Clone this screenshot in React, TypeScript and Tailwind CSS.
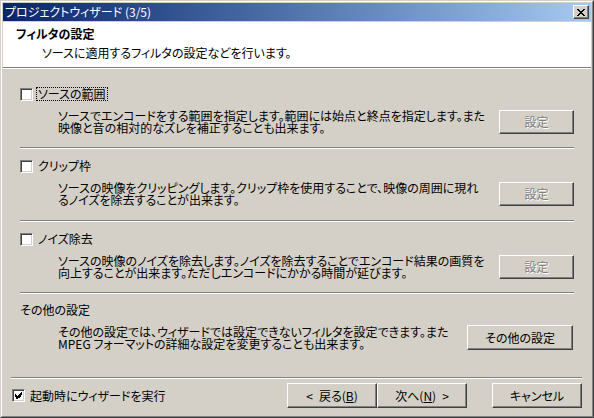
import type { ReactNode } from 'react'

/* Classic Windows 2000 wizard page: "フィルタの設定" (step 3 of 5). */

const FONT = "font-['Noto_Sans_CJK_JP','Noto_Sans_CJK_SC',sans-serif] [font-feature-settings:'palt']"

function Etched({ className = '' }: { className?: string }) {
  return <div className={`h-[2px] border-t border-b border-t-[#808080] border-b-white ${className}`} />
}

function Button({ children, disabled, className = '' }: { children: ReactNode; disabled?: boolean; className?: string }) {
  return (
    <button
      type="button"
      className={`flex items-center justify-center bg-[#d4d0c8] border border-t-white border-l-white border-r-[#404040] border-b-[#404040] shadow-[inset_-1px_-1px_#808080] text-[12px] leading-[14px] ${
        disabled ? 'text-[#808080] [text-shadow:1px_1px_0_#fff]' : 'text-black'
      } ${className}`}
    >
      {children}
    </button>
  )
}

function CheckBox({ checked }: { checked?: boolean }) {
  return (
    <span className="flex items-center justify-center w-[13px] h-[13px] shrink-0 bg-white border border-t-[#808080] border-l-[#808080] border-r-white border-b-white shadow-[inset_1px_1px_#404040,inset_-1px_-1px_#d4d0c8]">
      {checked && (
        <svg width="7" height="7" viewBox="0 0 7 7" shapeRendering="crispEdges" aria-hidden="true">
          <path
            fill="#000"
            d="M6 0h1v3h-1zM5 1h1v4h-1zM4 2h1v4h-1zM0 2h1v3h-1zM1 3h1v4h-1zM2 4h1v3h-1zM3 3h1v3h-1z"
          />
        </svg>
      )}
    </span>
  )
}

function Section({
  label,
  lines,
  action,
  checkbox = true,
  focused,
  disabled = true,
  labelTop,
  contentTop,
  bottom,
  buttonClass = 'w-[75px] h-[24px]',
}: {
  label: string
  lines: string[]
  action: string
  checkbox?: boolean
  focused?: boolean
  disabled?: boolean
  labelTop: string
  contentTop: string
  bottom: string
  buttonClass?: string
}) {
  return (
    <div className={`${labelTop} ${bottom}`}>
      <div className="flex items-center h-[14px]">
        {checkbox && <CheckBox />}
        <span
          className={`${checkbox ? 'ml-[3px]' : '-ml-[2px]'} px-[1px] border leading-[12px] ${
            focused ? 'border-dotted border-black' : 'border-transparent'
          }`}
        >
          {label}
        </span>
      </div>
      <div className={`${contentTop} flex items-start`}>
        <div className="flex-1 pl-[38px] leading-[12px] whitespace-nowrap">
          {lines.map((l) => (
            <div key={l}>{l}</div>
          ))}
        </div>
        <Button disabled={disabled} className={buttonClass}>
          {action}
        </Button>
      </div>
    </div>
  )
}

export default function App() {
  return (
    <div className={`w-[594px] h-[418px] bg-[#d4d0c8] text-[12px] text-black ${FONT}`}>
      {/* window frame */}
      <div className="w-full h-full border border-t-[#d4d0c8] border-l-[#d4d0c8] border-r-[#404040] border-b-[#404040]">
        <div className="w-full h-full border border-t-white border-l-white border-r-[#808080] border-b-[#808080] p-[1px] flex flex-col">
          {/* title bar */}
          <div className="h-[18px] flex items-center bg-gradient-to-r from-[#0a246a] to-[#a6caf0] pl-[2px] pr-[2px]">
            <span className="flex-1 text-white leading-[18px]">プロジェクトウィザード (3/5)</span>
            <span className="flex items-center justify-center w-[16px] h-[14px] bg-[#d4d0c8] border border-t-white border-l-white border-r-[#404040] border-b-[#404040] shadow-[inset_-1px_-1px_#808080]">
              <svg width="8" height="7" viewBox="0 0 8 7" shapeRendering="crispEdges" aria-hidden="true">
                <path
                  fill="#000"
                  d="M0 0h2v1h-2zM6 0h2v1h-2zM1 1h2v1h-2zM5 1h2v1h-2zM2 2h4v1h-4zM3 3h2v1h-2zM2 4h4v1h-4zM1 5h2v1h-2zM5 5h2v1h-2zM0 6h2v1h-2zM6 6h2v1h-2z"
                />
              </svg>
            </span>
          </div>

          {/* header */}
          <div className="mt-[1px] h-[45px] bg-white pt-[5px]">
            <div className="pl-[13px] font-bold leading-[14px]">フィルタの設定</div>
            <div className="pl-[39px] mt-[5px] leading-[14px]">ソースに適用するフィルタの設定などを行います。</div>
          </div>
          <Etched />

          {/* body */}
          <div className="flex flex-col pl-[17px] w-[571px]">
            <Section
              label="ソースの範囲"
              focused
              labelTop="mt-[18px]"
              contentTop="mt-[9px]"
              bottom="mb-[13px]"
              action="設定"
              lines={[
                'ソースでエンコードをする範囲を指定します。範囲には始点と終点を指定します。また',
                '映像と音の相対的なズレを補正することも出来ます。',
              ]}
            />
            <Etched />
            <Section
              label="クリップ枠"
              labelTop="mt-[10px]"
              contentTop="mt-[9px]"
              bottom="mb-[14px]"
              action="設定"
              lines={[
                'ソースの映像をクリッピングします。クリップ枠を使用することで、映像の周囲に現れ',
                'るノイズを除去することが出来ます。',
              ]}
            />
            <Etched />
            <Section
              label="ノイズ除去"
              labelTop="mt-[10px]"
              contentTop="mt-[9px]"
              bottom="mb-[13px]"
              action="設定"
              lines={[
                'ソースの映像のノイズを除去します。ノイズを除去することでエンコード結果の画質を',
                '向上することが出来ます。ただしエンコードにかかる時間が延びます。',
              ]}
            />
            <Etched />
            <Section
              label="その他の設定"
              checkbox={false}
              disabled={false}
              labelTop="mt-[9px]"
              contentTop="mt-[9px]"
              bottom=""
              buttonClass="w-[106px] h-[25px] -mt-[1px] mr-[1px]"
              action="その他の設定"
              lines={[
                'その他の設定では、ウィザードでは設定できないフィルタを設定できます。また',
                'MPEG フォーマットの詳細な設定を変更することも出来ます。',
              ]}
            />
          </div>

          {/* footer */}
          <Etched className="mt-auto ml-[8px] mr-[9px]" />
          <div className="flex items-center mt-[4px] mb-[7px] pl-[9px] pr-[9px]">
            <CheckBox checked />
            <span className="ml-[5px] flex-1 leading-[14px]">起動時にウィザードを実行</span>
            <Button className="w-[90px] h-[25px]">
              <span className="mr-[6px]">&lt;</span>戻る(<span className="underline">B</span>)
            </Button>
            <Button className="w-[90px] h-[25px]">
              次へ(<span className="underline">N</span>)<span className="ml-[6px]">&gt;</span>
            </Button>
            <Button className="w-[90px] h-[25px] ml-[25px]">キャンセル</Button>
          </div>
        </div>
      </div>
    </div>
  )
}
